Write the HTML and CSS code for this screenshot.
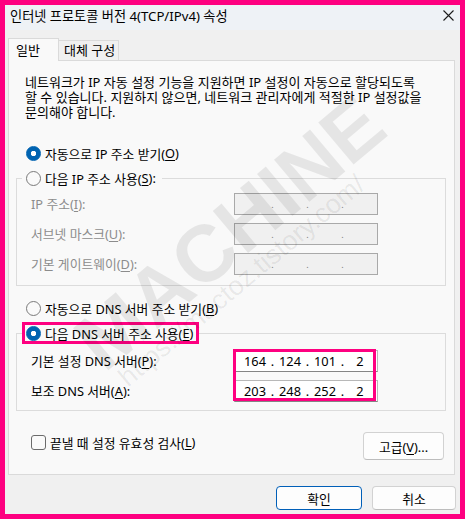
FILE: index.html
```html
<!DOCTYPE html>
<html lang="ko">
<head>
    <meta charset="UTF-8">
    <title>인터넷 프로토콜 버전 4(TCP/IPv4) 속성</title>
    <link rel="stylesheet" href="styles.css">
</head>
<body>
    <div class="window">
        <div class="titlebar">
            <span class="title">인터넷 프로토콜 버전 4(TCP/IPv4) 속성</span>
            <span class="close" aria-label="닫기">
                <svg width="11" height="11" viewBox="0 0 11 11"><path d="M0.5 0.5L10.5 10.5M10.5 0.5L0.5 10.5" stroke="#1b1b1b" stroke-width="1.1"/></svg>
            </span>
        </div>
        <div class="body">
            <div class="tabs">
                <div class="tab active">일반</div>
                <div class="tab">대체 구성</div>
            </div>
            <div class="panel">
                <p class="desc">네트워크가 IP 자동 설정 기능을 지원하면 IP 설정이 자동으로 할당되도록<br>할 수 있습니다. 지원하지 않으면, 네트워크 관리자에게 적절한 IP 설정값을<br>문의해야 합니다.</p>

                <div class="radio checked first">자동으로 IP 주소 받기(<u>O</u>)</div>

                <fieldset class="group ip-group disabled">
                    <legend><span class="radio">다음 IP 주소 사용(<u>S</u>):</span></legend>
                    <div class="rows">
                        <span class="label">IP 주소(<u>I</u>):</span>
                        <div class="ip"><span></span><i>.</i><span></span><i>.</i><span></span><i>.</i><span></span></div>
                        <span class="label">서브넷 마스크(<u>U</u>):</span>
                        <div class="ip"><span></span><i>.</i><span></span><i>.</i><span></span><i>.</i><span></span></div>
                        <span class="label">기본 게이트웨이(<u>D</u>):</span>
                        <div class="ip"><span></span><i>.</i><span></span><i>.</i><span></span><i>.</i><span></span></div>
                    </div>
                </fieldset>

                <div class="radio second">자동으로 DNS 서버 주소 받기(<u>B</u>)</div>

                <fieldset class="group dns-group">
                    <legend class="marked"><span class="radio checked">다음 DNS 서버 주소 사용(<u>E</u>)</span></legend>
                    <div class="rows">
                        <div class="labels">
                            <span class="label">기본 설정 DNS 서버(<u>P</u>):</span>
                            <span class="label">보조 DNS 서버(<u>A</u>):</span>
                        </div>
                        <div class="fields marked-box">
                            <div class="ip"><span>164</span><i>.</i><span>124</span><i>.</i><span>101</span><i>.</i><span>2</span></div>
                            <div class="ip"><span>203</span><i>.</i><span>248</span><i>.</i><span>252</span><i>.</i><span>2</span></div>
                        </div>
                    </div>
                </fieldset>

                <div class="options">
                    <div class="checkbox">끝낼 때 설정 유효성 검사(<u>L</u>)</div>
                    <button class="btn advanced">고급(<u>V</u>)...</button>
                </div>
            </div>
            <div class="footer">
                <button class="btn ok">확인</button>
                <button class="btn cancel">취소</button>
            </div>
        </div>

        <div class="watermark">
            <span class="wm-big">MACHINE</span>
            <span class="wm-url">https://mactoz.tistory.com/</span>
        </div>
    </div>
</body>
</html>
```

FILE: styles.css
```css
* {
    box-sizing: border-box;
}

body {
    margin: 0;
    background: #fe0080;
    font-family: "Noto Sans", "Noto Sans CJK KR", sans-serif;
    font-size: 12.8px;
    color: #000;
}

u {
    text-underline-offset: 2px;
}

.window {
    position: relative;
    margin: 5px;
    height: 509px;
    background: #f0f0f0;
    display: flex;
    flex-direction: column;
    overflow: hidden;
}

/* Title bar */
.titlebar {
    height: 26px;
    background: #eef2f6;
    display: flex;
    justify-content: space-between;
    align-items: flex-start;
    padding: 1px 6px 0 5px;
    line-height: 20px;
    font-size: 13.2px;
}

.close {
    display: flex;
    margin-top: 4px;
}

/* Body */
.body {
    flex: 1;
    display: flex;
    flex-direction: column;
    padding: 8px 5px 4px 3px;
}

.tabs {
    display: flex;
    align-items: flex-end;
    height: 22px;
    font-size: 13px;
}

.tab {
    height: 20px;
    line-height: 19px;
    padding-left: 5px;
    width: 60px;
    border: 1px solid #dadada;
    border-bottom: none;
    border-left: none;
    background: #f0f0f0;
}

.tab.active {
    position: relative;
    z-index: 1;
    width: 51px;
    height: 23px;
    margin-bottom: -1px;
    line-height: 22px;
    padding-left: 7px;
    border-left: 1px solid #dadada;
    background: #f9f9f9;
}

.panel {
    border: 1px solid #dadada;
    background: #f9f9f9;
    padding: 14px 8px 14px 0;
}

.desc {
    margin: 0 0 0 16px;
    font-size: 13px;
    line-height: 15px;
}

/* Radio buttons */
.radio {
    display: flex;
    align-items: center;
    height: 20px;
    white-space: nowrap;
}

.radio::before {
    content: '';
    width: 13px;
    height: 13px;
    margin-right: 4px;
    border-radius: 50%;
    border: 1px solid #7a7a7a;
    background: #fafafa;
    flex-shrink: 0;
}

.radio.checked::before {
    border-color: #0063b1;
    background: radial-gradient(circle, #fff 0 2.4px, #0063b1 3px);
}

.radio.first {
    margin: 23px 0 0 17px;
}

.radio.second {
    margin: 12px 0 0 17px;
}

/* Group boxes */
.group {
    margin: 4px 0 0 7px;
    border: 1px solid #dcdcdc;
    padding: 4px 0 10px 5px;
    min-width: 0;
}

.dns-group {
    padding: 5px 0 8px 5px;
}

legend {
    padding: 0 3px 0 1px;
    border: 3px solid transparent;
    height: 22px;
}

legend .radio {
    height: 16px;
}

legend.marked {
    border-color: #fe0080;
}

.rows {
    display: grid;
    grid-template-columns: 203px 144px;
    row-gap: 8px;
    align-items: center;
    padding-left: 9px;
}

.label {
    line-height: 22px;
}

.disabled .label {
    color: #8c8c8c;
}

.labels,
.fields {
    display: flex;
    flex-direction: column;
    gap: 8px;
}

.labels {
    padding-top: 1px;
}

.marked-box {
    position: relative;
}

.marked-box::after {
    content: '';
    position: absolute;
    top: -1px;
    left: -1px;
    right: 2px;
    bottom: 1px;
    border: 3px solid #fe0080;
}

/* IP address fields */
.ip {
    display: flex;
    align-items: center;
    height: 22px;
    padding-left: 6px;
    border: 1px solid #b8b8b8;
    border-bottom-color: #858585;
    background: #fff;
}

.ip span {
    width: 28px;
    text-align: center;
}

.ip i {
    width: 7px;
    font-style: normal;
    text-align: center;
}

.disabled .ip {
    background: #f0f0f0;
    border-color: #a9a9a9;
    color: #7a7a7a;
}

.disabled .ip i {
    font-size: 9px;
}

/* Bottom options */
.options {
    display: flex;
    justify-content: space-between;
    align-items: flex-start;
    margin-top: 21px;
}

.checkbox {
    display: flex;
    align-items: center;
    height: 20px;
    margin-left: 22px;
}

.checkbox::before {
    content: '';
    width: 13px;
    height: 13px;
    margin-right: 4px;
    border: 1px solid #6b6b6b;
    border-radius: 3px;
    background: #fafafa;
}

.btn {
    font: inherit;
    color: #000;
    background: #fdfdfd;
    border: 1px solid #d2d2d2;
    border-bottom-color: #bdbdbd;
    border-radius: 4px;
    padding: 0;
}

.advanced {
    width: 81px;
    height: 28px;
    margin-right: 2px;
}

.footer {
    display: flex;
    justify-content: flex-end;
    gap: 10px;
    margin: 11px -1px 0 0;
}

.footer .btn {
    height: 24px;
    width: 84px;
}

.footer .ok {
    width: 86px;
    border: 1px solid #005fb8;
}

/* Watermark */
.watermark {
    position: absolute;
    inset: 0;
    pointer-events: none;
}

.wm-big,
.wm-url {
    position: absolute;
    white-space: nowrap;
    font-family: "Liberation Sans", sans-serif;
    color: rgba(0, 0, 0, 0.08);
    transform: translate(-50%, -50%) rotate(-40deg);
}

.wm-big {
    left: 225px;
    top: 228px;
    font-size: 80px;
    font-weight: bold;
}

.wm-url {
    left: 237px;
    top: 276px;
    font-size: 27px;
}
```
